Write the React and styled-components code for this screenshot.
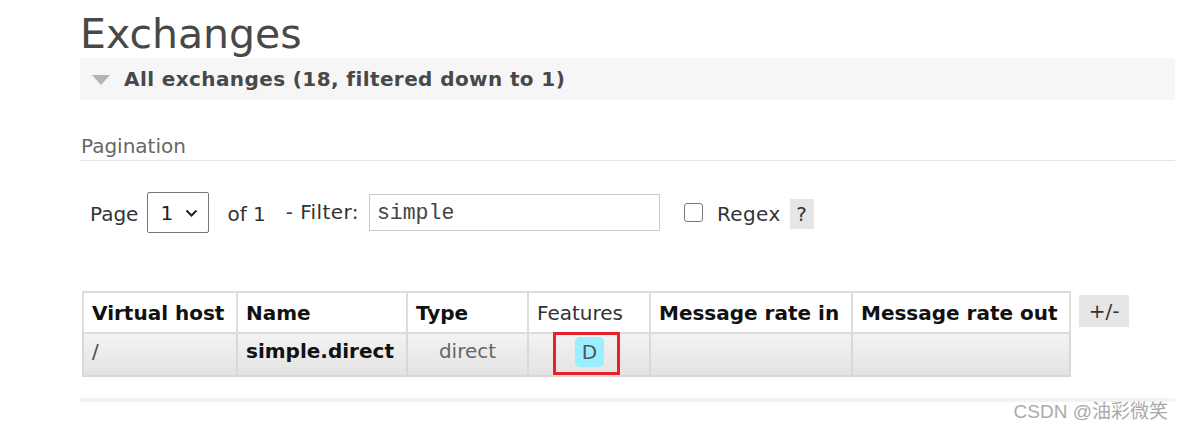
import styled, { createGlobalStyle } from "styled-components";

const GlobalStyle = createGlobalStyle`
  body {
    margin: 0;
    background: #fff;
    font-family: "DejaVu Sans", Verdana, sans-serif;
    color: #484848;
  }
`;

const columns = [
  { key: "vhost", label: "Virtual host", width: 154 },
  { key: "name", label: "Name", width: 170 },
  { key: "type", label: "Type", width: 121 },
  { key: "features", label: "Features", width: 122, light: true },
  { key: "rateIn", label: "Message rate in", width: 202 },
  { key: "rateOut", label: "Message rate out", width: 218 },
];

export default function App() {
  return (
    <>
      <GlobalStyle />
      <Page>
        <Title>Exchanges</Title>
        <SectionBar>
          <Triangle />
          <SectionTitle>All exchanges (18, filtered down to 1)</SectionTitle>
        </SectionBar>

        <SubHeading>Pagination</SubHeading>
        <FilterRow>
          <Label>Page</Label>
          <PageSelect>
            <span>1</span>
            <svg width="13" height="8" viewBox="0 0 13 8">
              <path d="M1.5 1.5l5 5 5-5" fill="none" stroke="#222" strokeWidth="2" />
            </svg>
          </PageSelect>
          <Label $left={18}>of 1</Label>
          <Label $left={20} $up $spaced>- Filter:</Label>
          <FilterInput defaultValue="simple" />
          <CheckBox />
          <Label $left={14} $spaced>Regex</Label>
          <Help>?</Help>
        </FilterRow>

        <TableRow>
          <Table>
            <colgroup>
              {columns.map((c) => (
                <col key={c.key} style={{ width: c.width }} />
              ))}
            </colgroup>
            <thead>
              <tr>
                {columns.map((c) => (
                  <Th key={c.key} $light={c.light}>{c.label}</Th>
                ))}
              </tr>
            </thead>
            <tbody>
              <tr>
                <Td>/</Td>
                <Td $bold>simple.direct</Td>
                <Td $center $muted>direct</Td>
                <Td $center $badge>
                  <Badge>D</Badge>
                  <Highlight />
                </Td>
                <Td />
                <Td />
              </tr>
            </tbody>
          </Table>
          <ToggleButton>+/-</ToggleButton>
        </TableRow>

        <BottomBar />
      </Page>
      <Watermark>CSDN @油彩微笑</Watermark>
    </>
  );
}

const Page = styled.div`
  padding-left: 80px;
  width: 1095px;
`;

const Title = styled.h1`
  margin: 0;
  padding-top: 10px;
  font-size: 41px;
  line-height: 48px;
  font-weight: normal;
  color: #484848;
`;

const SectionBar = styled.div`
  height: 42px;
  background: #f6f6f6;
  display: flex;
  align-items: center;
  padding-left: 12px;
`;

const Triangle = styled.span`
  width: 0;
  height: 0;
  border-left: 9px solid transparent;
  border-right: 9px solid transparent;
  border-top: 10px solid #b4b4b4;
  margin-top: 1px;
`;

const SectionTitle = styled.h2`
  margin: 0 0 0 14px;
  font-size: 20px;
  letter-spacing: 0.4px;
  font-weight: bold;
  color: #484848;
`;

const SubHeading = styled.h3`
  margin: 34px 0 0;
  padding: 0 0 2px 1px;
  font-size: 20px;
  line-height: 24px;
  font-weight: normal;
  color: #666;
  border-bottom: 1px solid #e6e6e6;
`;

const FilterRow = styled.div`
  display: flex;
  align-items: center;
  margin-top: 31px;
  padding-left: 10px;
  height: 41px;
`;

const Label = styled.span`
  font-size: 20px;
  color: #333;
  margin-left: ${(p) => p.$left || 0}px;
  letter-spacing: ${(p) => (p.$spaced ? "0.4px" : "0")};
  position: relative;
  top: ${(p) => (p.$up ? -1 : 1)}px;
`;

const PageSelect = styled.div`
  box-sizing: border-box;
  width: 62px;
  height: 41px;
  margin-left: 9px;
  border: 1px solid #767676;
  border-radius: 2px;
  display: flex;
  align-items: center;
  justify-content: space-between;
  padding: 0 10px 0 12px;
  font-size: 20px;
  color: #222;
`;

const FilterInput = styled.input`
  box-sizing: border-box;
  width: 291px;
  height: 37px;
  margin-left: 10px;
  border: 1px solid #c8c8c8;
  padding: 0 7px;
  font-family: "Liberation Mono", "Courier New", monospace;
  font-size: 21.5px;
  color: #444;
  outline: none;
`;

const CheckBox = styled.span`
  box-sizing: border-box;
  width: 19px;
  height: 19px;
  margin-left: 24px;
  border: 1.5px solid #767676;
  border-radius: 3px;
  background: #fff;
`;

const Help = styled.span`
  margin-left: 9px;
  width: 24px;
  height: 30px;
  background: #e6e6e6;
  display: flex;
  align-items: center;
  justify-content: center;
  font-size: 20px;
  color: #333;
  position: relative;
  top: 1px;
`;

const TableRow = styled.div`
  display: flex;
  align-items: flex-start;
  gap: 8px;
  margin-top: 58px;
  padding-left: 2px;
`;

const Table = styled.table`
  border-collapse: collapse;
  table-layout: fixed;
  width: 987px;
  border: 2px solid #dcdcdc;
`;

const Th = styled.th`
  height: 39px;
  padding: 0 8px;
  text-align: left;
  font-size: 20px;
  font-weight: ${(p) => (p.$light ? "normal" : "bold")};
  color: ${(p) => (p.$light ? "#333" : "#111")};
  background: #fff;
  border: 2px solid #dcdcdc;
  white-space: nowrap;
`;

const Td = styled.td`
  position: relative;
  height: 43px;
  box-sizing: border-box;
  padding: ${(p) => (p.$badge ? "3px 8px 0" : "5px 8px 0")};
  vertical-align: top;
  font-size: 20px;
  line-height: 24px;
  font-weight: ${(p) => (p.$bold ? "bold" : "normal")};
  color: ${(p) => (p.$bold ? "#111" : p.$muted ? "#666" : "#484848")};
  text-align: ${(p) => (p.$center ? "center" : "left")};
  background: linear-gradient(#f3f3f3, #e3e3e3);
  border: 2px solid #d8d8d8;
  white-space: nowrap;
`;

const Badge = styled.span`
  display: inline-flex;
  align-items: center;
  justify-content: center;
  width: 29px;
  height: 30px;
  margin-left: 1px;
  border-radius: 5px;
  background: #99eeff;
  color: #555;
  font-size: 20px;
`;

const Highlight = styled.span`
  position: absolute;
  top: -2px;
  left: 24px;
  width: 67px;
  height: 43px;
  box-sizing: border-box;
  border: 3px solid #e8202a;
  pointer-events: none;
`;

const ToggleButton = styled.span`
  margin-top: 4px;
  width: 50px;
  height: 32px;
  background: #e6e6e6;
  display: flex;
  align-items: center;
  justify-content: center;
  font-size: 20px;
  color: #333;
`;

const BottomBar = styled.div`
  margin-top: 21px;
  height: 4px;
  background: #f3f3f3;
`;

const Watermark = styled.div`
  position: absolute;
  right: 16px;
  top: 396px;
  font-family: "Liberation Sans", "Noto Sans CJK SC", sans-serif;
  font-size: 19px;
  color: #aaa;
`;
